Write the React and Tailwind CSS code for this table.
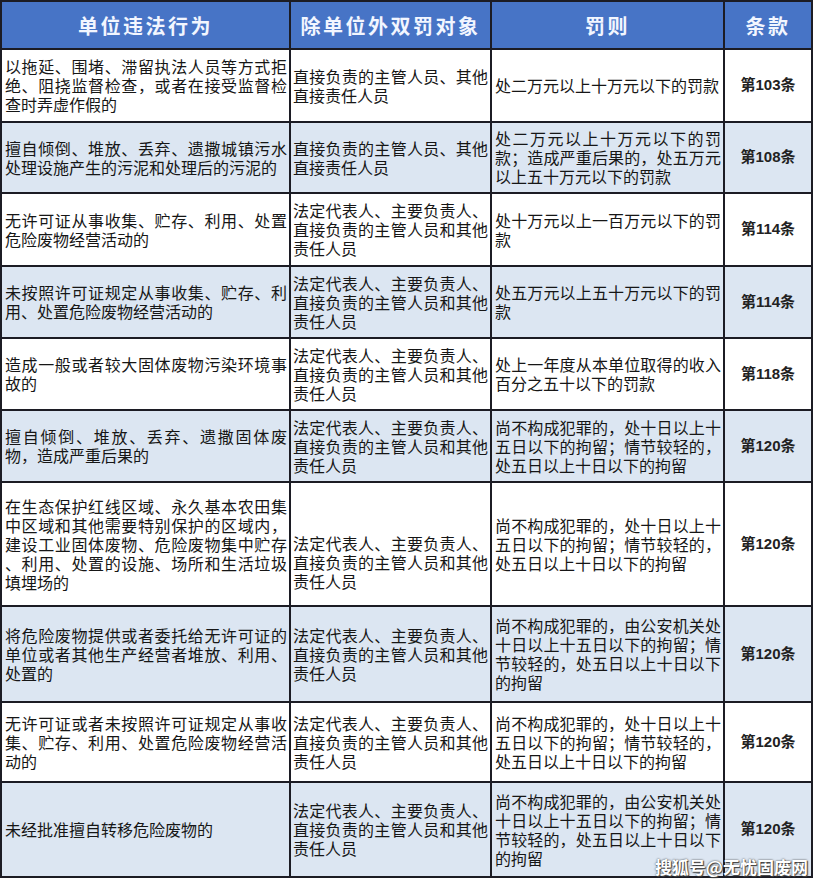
const UNIT_STAFF = ["直接负责的主管人员、其他", "直接责任人员"];
const LEGAL_STAFF = ["法定代表人、主要负责人、", "直接负责的主管人员和其他", "责任人员"];
const DETAIN_A = ["尚不构成犯罪的，处十日以上十", "五日以下的拘留；情节较轻的，", "处五日以上十日以下的拘留"];
const DETAIN_B = ["尚不构成犯罪的，由公安机关处", "十日以上十五日以下的拘留；情", "节较轻的，处五日以上十日以下", "的拘留"];

const ROWS = [
  {
    act: ["以拖延、围堵、滞留执法人员等方式拒", "绝、阻挠监督检查，或者在接受监督检", "查时弄虚作假的"],
    target: UNIT_STAFF,
    penalty: ["处二万元以上十万元以下的罚款"],
    article: "第103条",
  },
  {
    act: ["擅自倾倒、堆放、丢弃、遗撒城镇污水", "处理设施产生的污泥和处理后的污泥的"],
    target: UNIT_STAFF,
    penalty: ["处二万元以上十万元以下的罚", "款；造成严重后果的，处五万元", "以上五十万元以下的罚款"],
    article: "第108条",
  },
  {
    act: ["无许可证从事收集、贮存、利用、处置", "危险废物经营活动的"],
    target: LEGAL_STAFF,
    penalty: ["处十万元以上一百万元以下的罚", "款"],
    article: "第114条",
  },
  {
    act: ["未按照许可证规定从事收集、贮存、利", "用、处置危险废物经营活动的"],
    target: LEGAL_STAFF,
    penalty: ["处五万元以上五十万元以下的罚", "款"],
    article: "第114条",
  },
  {
    act: ["造成一般或者较大固体废物污染环境事", "故的"],
    target: LEGAL_STAFF,
    penalty: ["处上一年度从本单位取得的收入", "百分之五十以下的罚款"],
    article: "第118条",
  },
  {
    act: ["擅自倾倒、堆放、丢弃、遗撒固体废", "物，造成严重后果的"],
    target: LEGAL_STAFF,
    penalty: DETAIN_A,
    article: "第120条",
  },
  {
    act: [
      "在生态保护红线区域、永久基本农田集",
      "中区域和其他需要特别保护的区域内，",
      "建设工业固体废物、危险废物集中贮存",
      "、利用、处置的设施、场所和生活垃圾",
      "填埋场的",
    ],
    target: LEGAL_STAFF,
    targetShift: true,
    penalty: DETAIN_A,
    article: "第120条",
  },
  {
    act: ["将危险废物提供或者委托给无许可证的", "单位或者其他生产经营者堆放、利用、", "处置的"],
    target: LEGAL_STAFF,
    penalty: DETAIN_B,
    article: "第120条",
  },
  {
    act: ["无许可证或者未按照许可证规定从事收", "集、贮存、利用、处置危险废物经营活", "动的"],
    target: LEGAL_STAFF,
    penalty: DETAIN_A,
    article: "第120条",
  },
  {
    act: ["未经批准擅自转移危险废物的"],
    target: LEGAL_STAFF,
    penalty: DETAIN_B,
    article: "第120条",
  },
];

function Lines({ lines }) {
  return lines.map((line, i) => (
    <div
      key={i}
      className={
        i < lines.length - 1
          ? "text-justify [text-align-last:justify] leading-[19px]"
          : "text-left leading-[19px]"
      }
    >
      {line}
    </div>
  ));
}

function Cell({ children, shaded, className = "" }) {
  return (
    <div
      className={`flex flex-col justify-center px-[2px] text-[16px] text-[#161616] ${
        shaded ? "bg-[#dce6f2]" : "bg-white"
      } ${className}`.trim()}
    >
      {children}
    </div>
  );
}

function HeadCell({ children }) {
  return (
    <div className="flex items-center justify-center pt-[2px] bg-[#4774c6] text-[20px] font-bold tracking-[2.5px] text-[#f2f6ff]">
      {children}
    </div>
  );
}

export default function App() {
  return (
    <div
      className="relative h-[879px] w-[815px] bg-white"
      style={{ fontFamily: '"Noto Sans CJK SC", "Liberation Sans", sans-serif' }}
    >
      <div className="grid w-[813px] grid-cols-[287px_199px_231px_86px] grid-rows-[46px_71px_69px_71px_70px_70px_70px_122px_94px_78px_93px] gap-[2px] bg-[#1c1c24] p-[2px]">
        <HeadCell>单位违法行为</HeadCell>
        <HeadCell>除单位外双罚对象</HeadCell>
        <HeadCell>罚则</HeadCell>
        <HeadCell>条款</HeadCell>

        {ROWS.map((row, index) => {
          const shaded = index % 2 === 1;
          return [
            <Cell key={`a${index}`} shaded={shaded} className="pl-[3px]">
              <Lines lines={row.act} />
            </Cell>,
            <Cell key={`b${index}`} shaded={shaded} className={row.targetShift ? "pt-[37px]" : ""}>
              <Lines lines={row.target} />
            </Cell>,
            <Cell key={`c${index}`} shaded={shaded} className="pl-[3px]">
              <Lines lines={row.penalty} />
            </Cell>,
            <Cell key={`d${index}`} shaded={shaded} className="items-center">
              <span
                className="text-[15px] font-bold text-[#222]"
                style={{ fontFamily: '"Liberation Sans", "Noto Sans CJK SC", sans-serif' }}
              >
                {row.article}
              </span>
            </Cell>,
          ];
        })}
      </div>

      <div className="absolute bottom-[4px] right-[7px] text-[17px] font-bold leading-none text-white [text-shadow:0_0_2px_#333,1px_1px_1px_#444]">
        搜狐号@无忧固废网
      </div>
    </div>
  );
}
